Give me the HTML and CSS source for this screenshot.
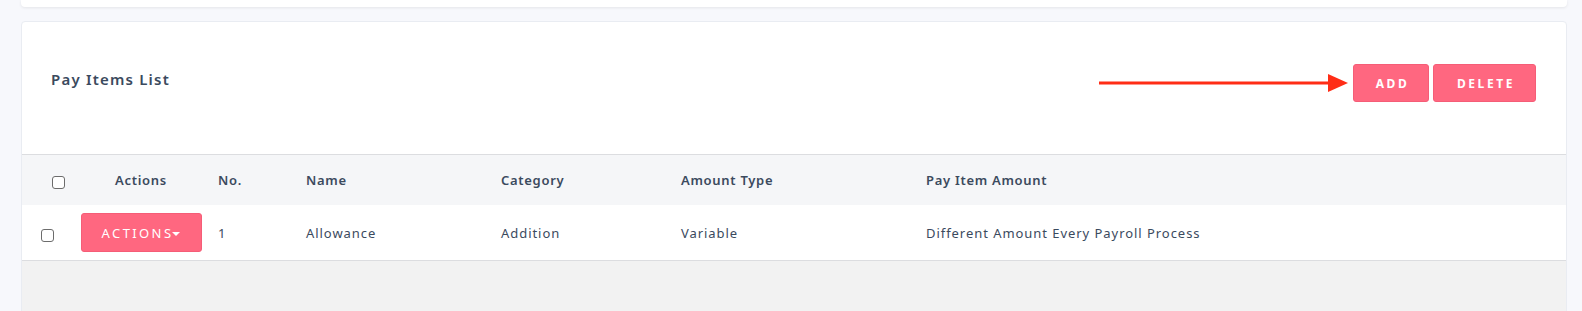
FILE: index.html
```html
<!DOCTYPE html>
<html lang="en">
<head>
    <meta charset="UTF-8">
    <meta name="viewport" content="width=device-width, initial-scale=1.0">
    <title>Pay Items List</title>
    <link rel="stylesheet" href="styles.css">
</head>
<body>
    <div class="page">
        <div class="top-card"></div>
        <div class="card">
            <div class="card-head">
                <h2 class="card-title">Pay Items List</h2>
                <div class="head-actions">
                    <svg class="pointer" width="250" height="20" viewBox="0 0 250 20">
                        <line x1="0" y1="10" x2="232" y2="10" stroke="#ff2d16" stroke-width="3"/>
                        <polygon points="229,1 249,10 229,19" fill="#ff2d16"/>
                    </svg>
                    <button class="btn btn-add">ADD</button>
                    <button class="btn btn-delete">DELETE</button>
                </div>
            </div>
            <table class="items">
                <colgroup>
                    <col style="width: 50px">
                    <col style="width: 138px">
                    <col style="width: 88px">
                    <col style="width: 195px">
                    <col style="width: 180px">
                    <col style="width: 245px">
                    <col>
                </colgroup>
                <thead>
                    <tr>
                        <th class="check-head"><input type="checkbox" class="check"></th>
                        <th class="center">Actions</th>
                        <th>No.</th>
                        <th>Name</th>
                        <th>Category</th>
                        <th>Amount Type</th>
                        <th>Pay Item Amount</th>
                    </tr>
                </thead>
                <tbody>
                    <tr>
                        <td class="check-cell"><input type="checkbox" class="check"></td>
                        <td class="center"><button class="btn btn-actions">ACTIONS<span class="caret"></span></button></td>
                        <td>1</td>
                        <td>Allowance</td>
                        <td>Addition</td>
                        <td>Variable</td>
                        <td>Different Amount Every Payroll Process</td>
                    </tr>
                </tbody>
            </table>
            <div class="table-footer"></div>
        </div>
    </div>
</body>
</html>
```

FILE: styles.css
```css
body {
    margin: 0;
    background: #f7f8fc;
    font-family: "Noto Sans", Arial, sans-serif;
    color: #3b4a5e;
}
.page {
    padding: 0 15px 0 21px;
}
.top-card {
    height: 7px;
    background: #fff;
    border-radius: 0 0 4px 4px;
    box-shadow: 0 1px 3px rgba(0, 0, 0, 0.08);
}
.card {
    margin-top: 14px;
    background: #fff;
    border: 1px solid #e9ecf2;
    border-radius: 4px 4px 0 0;
    overflow: hidden;
}
.card-head {
    height: 132px;
    box-sizing: border-box;
    padding: 42px 30px 0 29px;
    display: flex;
    justify-content: space-between;
    align-items: flex-start;
}
.card-title {
    margin: 5px 0 0;
    font-size: 15px;
    line-height: 20px;
    font-weight: 600;
    letter-spacing: 1.2px;
    color: #3b4a5e;
}
.head-actions {
    display: flex;
    align-items: center;
    gap: 4px;
}
.btn {
    font-family: inherit;
    background: #ff6780;
    color: #fff;
    border: 1px solid #f55d77;
    border-radius: 3px;
    cursor: pointer;
}
.btn-add, .btn-delete {
    height: 38px;
    padding: 0 0 0 3px;
    font-size: 12px;
    font-weight: 700;
    letter-spacing: 2.6px;
}
.btn-add {
    width: 76px;
}
.btn-delete {
    width: 103px;
}
.items {
    width: 100%;
    border-collapse: collapse;
    table-layout: fixed;
    font-size: 13px;
}
.items thead tr {
    background: #f5f6f8;
    border-top: 1px solid #dcdde0;
}
.items th {
    height: 50px;
    padding: 0 8px;
    text-align: left;
    font-weight: 600;
    letter-spacing: 0.7px;
}
.items td {
    height: 55px;
    padding: 0 8px;
    letter-spacing: 0.95px;
}
.items tbody tr {
    border-bottom: 1px solid #dcdde0;
}
.items .center {
    text-align: center;
}
.items .check-head {
    padding-left: 30px;
}
.items .check-cell {
    padding-left: 19px;
}
.check {
    appearance: none;
    width: 13px;
    height: 13px;
    margin: 4px 0 0;
    border: 1px solid #6c6c6c;
    border-radius: 3px;
    background: #fff;
    vertical-align: middle;
}
.btn-actions {
    width: 121px;
    height: 39px;
    font-size: 13px;
    letter-spacing: 2.4px;
    padding: 0;
}
.caret {
    display: inline-block;
    width: 0;
    height: 0;
    margin-left: -1px;
    vertical-align: middle;
    border-top: 4px solid #fff;
    border-left: 4px solid transparent;
    border-right: 4px solid transparent;
}
.table-footer {
    height: 60px;
    background: #f2f2f2;
}
```
